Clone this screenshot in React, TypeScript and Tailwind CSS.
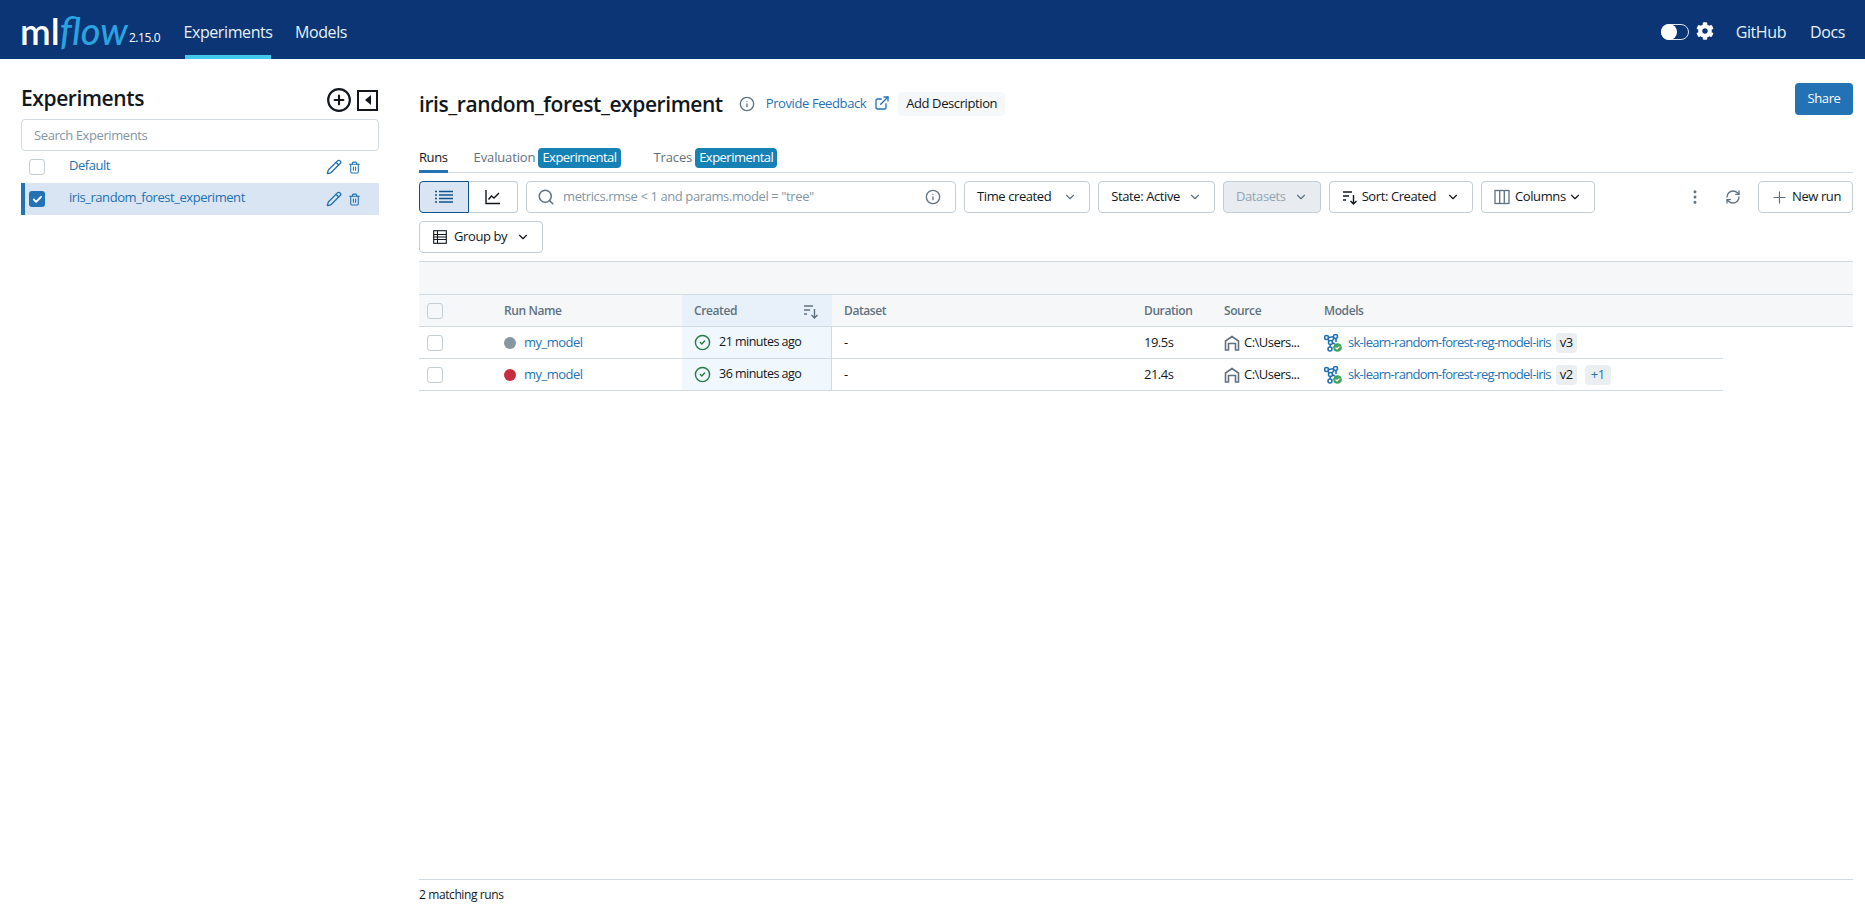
import React from 'react';
import {
  ChevronDown,
  CirclePlus,
  ExternalLink,
  Info,
  MoreVertical,
  Pencil,
  Plus,
  RefreshCw,
  Search,
  Trash2,
  Check,
  CircleCheck,
} from 'lucide-react';
import { FaCog } from 'react-icons/fa';

const SortIcon = () => (
  <svg width="16" height="16" viewBox="0 0 16 16" fill="none" stroke="currentColor" strokeWidth="1.4">
    <path d="M1 3h9M1 7h6M1 11h3M11.5 6v9M8.500 12l3 3 3-3" />
  </svg>
);

const ChartIcon = () => (
  <svg width="16" height="16" viewBox="0 0 16 16" fill="none" stroke="#11171c" strokeWidth="1.4">
    <path d="M1 1v13.500h14M3.500 10.500l3-3.500 2.500 2 5-5" />
  </svg>
);

const ListIcon = () => (
  <svg width="18" height="14" viewBox="0 0 18 14" fill="none" stroke="#0e538b" strokeWidth="1.6">
    <path d="M0 1.500h2M4 1.500h14M0 5h2M4 5h14M0 8.500h2M4 8.500h14M0 12h2M4 12h14" />
  </svg>
);

const GroupIcon = () => (
  <svg width="16" height="16" viewBox="0 0 16 16" fill="none" stroke="#11171c" strokeWidth="1.1">
    <rect x="1.700" y="1.700" width="12.600" height="12.600" />
    <path d="M1.700 5.500h12.600M1.700 8h12.600M1.700 10.500h12.600M5.500 1.700v12.600" />
  </svg>
);

const ColumnsIcon = () => (
  <svg width="16" height="16" viewBox="0 0 16 16" fill="none" stroke="#5f7281" strokeWidth="1.3">
    <rect x="1" y="1.500" width="14" height="13" />
    <path d="M5.700 1.500v13M10.300 1.500v13" />
  </svg>
);

const HouseIcon = () => (
  <svg width="16" height="16" viewBox="0 0 16 16" fill="none" stroke="#5f7281" strokeWidth="1.600">
    <path d="M1.500 15V6l6.500-4.500L14.500 6v9h-3V8.500h-7V15z" />
  </svg>
);

const ModelIcon = () => (
  <svg width="18" height="18" viewBox="0 0 18 18" fill="none" stroke="#2272b4" strokeWidth="1.6">
    <circle cx="2.500" cy="3.500" r="2" />
    <circle cx="11.500" cy="2.500" r="2" />
    <circle cx="6" cy="15" r="2" />
    <circle cx="6.500" cy="8.500" r="2" />
    <path d="M4.500 3.500l5-.8M3.800 5.200l1.500 1.800M8 7l2.300-3M6.200 10.500v2.500M12 4.500V8M8.500 9l2.500 1" />
    <circle cx="13.500" cy="13.500" r="4.300" fill="#3ba55c" stroke="none" />
    <path d="M11.500 13.500l1.500 1.500 2.500-2.500" stroke="#fff" strokeWidth="1.200" />
  </svg>
);

const Toolbutton = ({ children, disabled }: { children: React.ReactNode; disabled?: boolean }) => (
  <div
    className={`h-8 flex items-center rounded border border-[#c4ced7] px-3 text-[13px] ${
      disabled ? 'bg-[#e8ecf0] text-[#92a4b3]' : 'bg-white text-[#11171c]'
    }`}
  >
    {children}
  </div>
);

const ExperimentRow = ({ name, selected }: { name: string; selected?: boolean }) => (
  <div className={`h-8 flex items-center ${selected ? 'bg-[#d9e5f2] border-l-4 border-[#2272b4] pl-[4px]' : 'pl-2'}`}>
    {selected ? (
      <div className="w-4 h-4 rounded-[3px] bg-[#2272b4] flex items-center justify-center">
        <Check size={11} strokeWidth={4} className="text-white" />
      </div>
    ) : (
      <div className="w-4 h-4 rounded-[3px] border border-[#c4ced7] bg-white" />
    )}
    <span className="ml-[24px] mb-[3px] text-[13px] text-[#2272b4] flex-1 tracking-[-0.035em]">{name}</span>
    <Pencil size={16} className="text-[#2272b4] mr-[6px]" />
    <Trash2 size={13} className="text-[#2272b4] mr-[18px]" />
  </div>
);

const RunRow = ({ dot, time, dur, version, extra }: { dot: string; time: string; dur: string; version: string; extra?: boolean }) => (
  <div className="flex w-[1304px] h-8 border-b border-[#d1d9e1] text-[13px] text-[#11171c] tracking-[-0.04em]">
    <div className="w-[85px] pl-2 flex items-center">
      <div className="w-4 h-4 rounded-[3px] border border-[#c4ced7] bg-white" />
    </div>
    <div className="w-[178px] flex items-center">
      <div className={`w-3 h-3 rounded-full ${dot}`} />
      <span className="ml-2 text-[#2272b4]">my_model</span>
    </div>
    <div className="w-[150px] bg-[#f0f7fd] border-r border-[#d1d9e1] pl-3 flex items-center">
      <CircleCheck size={17} className="text-[#277c43]" />
      <span className="ml-2 text-[12.5px]">{time}</span>
    </div>
    <div className="w-[300px] pl-3 flex items-center">-</div>
    <div className="w-[80px] pl-3 flex items-center">{dur}</div>
    <div className="w-[100px] pl-3 flex items-center">
      <HouseIcon />
      <span className="ml-1">C:\Users...</span>
    </div>
    <div className="pl-3 flex items-center">
      <ModelIcon />
      <span className="ml-[6px] text-[#2272b4] tracking-[-0.055em]">sk-learn-random-forest-reg-model-iris</span>
      <span className="ml-[5px] bg-[#eaeef1] rounded px-1 h-[20px] flex items-center">{version}</span>
      {extra && <span className="ml-2 bg-[#eaeef1] text-[#2272b4] rounded px-1.5 h-[20px] flex items-center">+1</span>}
    </div>
  </div>
);

export default function App() {
  return (
    <div className="w-[1865px] h-[913px] flex flex-col bg-white font-['Open_Sans',sans-serif] tracking-[-0.025em] overflow-hidden">
      <header className="h-[59px] bg-[#0b3574] flex items-stretch text-white shrink-0">
        <div className="flex items-baseline pl-[20px] w-[185px] pt-[7px]">
          <span className="text-[37px] font-semibold leading-[46px] font-['Lato',sans-serif] tracking-normal">ml</span>
          <span className="text-[38px] font-medium leading-[46px] italic font-['Lato',sans-serif] tracking-normal text-[#2aa3e0]">flow</span>
          <span className="ml-[1px] text-[12px] -translate-y-[3px]">2.15.0</span>
        </div>
        <div className="h-full border-b-4 border-[#43c9ed] pt-[8px] flex items-center text-[16px] text-[#e6f1f5] w-[86px] justify-center">
          Experiments
        </div>
        <div className="ml-6 pt-1 flex items-center text-[16px] text-[#e6f1f5]">Models</div>
        <div className="ml-auto pt-1 flex items-center pr-[20px] text-[16px] text-[#e6f1f5]">
          <div className="w-7 h-4 rounded-full bg-[#0b3574] border border-[#dfe6ec] relative mr-[7px]">
            <div className="absolute left-[-1px] top-[-1px] w-4 h-4 rounded-full bg-white" />
          </div>
          <FaCog size={18} className="text-white mb-[2px]" />
          <span className="ml-[22px]">GitHub</span>
          <span className="ml-6">Docs</span>
        </div>
      </header>

      <div className="flex flex-1 min-h-0">
        <aside className="w-[419px] shrink-0 pl-[21px] pr-[40px] pt-6">
          <div className="flex items-center h-9">
            <h2 className="text-[21px] font-semibold text-[#11171c] flex-1 mb-[4px]">Experiments</h2>
            <CirclePlus size={26} className="text-[#11171c] mr-[5px] mb-[2px]" />
            <div className="w-[21px] h-[21px] border-2 border-[#11171c] flex items-center justify-center mr-[1px] mb-[2px]">
              <div className="w-0 h-0 border-y-[5px] border-y-transparent border-r-[6px] border-r-[#11171c]" />
            </div>
          </div>
          <div className="h-8 border border-[#d1d9e1] rounded flex items-center px-3 pt-px text-[13px] text-[#8396a5]">
            Search Experiments
          </div>
          <ExperimentRow name="Default" />
          <ExperimentRow name="iris_random_forest_experiment" selected />
        </aside>

        <main className="flex-1 min-w-0 pr-3 flex flex-col">
          <div className="flex items-center h-8 mt-6">
            <h1 className="text-[21px] font-semibold text-[#11171c] mt-[11px] tracking-[-0.02em]">iris_random_forest_experiment</h1>
            <Info size={16} className="ml-[16px] mt-[9px] text-[#5f7281]" />
            <span className="ml-[11px] mt-[9px] text-[13px] text-[#2272b4]">Provide Feedback</span>
            <ExternalLink size={16} className="ml-2 mt-[7px] text-[#2272b4]" />
            <span className="ml-2 mt-[9px] h-6 px-2 bg-[#f5f7f9] rounded text-[13px] text-[#11171c] flex items-center">Add Description</span>
            <div className="ml-auto h-8 w-[58px] rounded bg-[#2272b4] text-white text-[13px] flex items-center justify-center">Share</div>
          </div>

          <div className="mt-[25px] h-[33px] flex items-start border-b border-[#d1d9e1] text-[13px]">
            <div className="h-[33px] border-b-[3px] border-[#2272b4] text-[#11171c] font-medium flex items-center pt-[5px]">Runs</div>
            <div className="ml-[26px] h-[33px] pt-[2px] flex items-center text-[#5f7281] tracking-[-0.01em]">
              Evaluation
              <span className="ml-[3px] h-5 px-1 rounded bg-[#1681b4] text-white flex items-center tracking-[-0.04em]">Experimental</span>
            </div>
            <div className="ml-[33px] h-[33px] pt-[2px] flex items-center text-[#5f7281] tracking-[-0.01em]">
              Traces
              <span className="ml-[3px] h-5 px-1 rounded bg-[#1681b4] text-white flex items-center tracking-[-0.04em]">Experimental</span>
            </div>
          </div>

          <div className="mt-2 flex items-center gap-2">
            <div className="flex">
              <div className="w-[50px] h-8 bg-[#d9e5f2] border border-[#0e538b] rounded-l flex items-center justify-center">
                <ListIcon />
              </div>
              <div className="w-[49px] h-8 border border-l-0 border-[#c4ced7] rounded-r flex items-center justify-center">
                <ChartIcon />
              </div>
            </div>
            <div className="w-[430px] h-8 border border-[#c4ced7] rounded flex items-center pl-[10px] pr-[10px] text-[13px] text-[#8396a5]">
              <Search size={18} className="text-[#5f7281]" />
              <span className="ml-[8px] flex-1">metrics.rmse &lt; 1 and params.model = "tree"</span>
              <Info size={16} className="mr-[4px] text-[#5f7281]" />
            </div>
            <Toolbutton>
              Time created
              <ChevronDown size={14} className="ml-[12px] text-[#5f7281]" />
            </Toolbutton>
            <Toolbutton>
              State: Active
              <ChevronDown size={14} className="ml-[8px] text-[#5f7281]" />
            </Toolbutton>
            <Toolbutton disabled>
              Datasets
              <ChevronDown size={14} className="ml-2 text-[#5f7281]" />
            </Toolbutton>
            <Toolbutton>
              <SortIcon />
              <span className="ml-1">Sort: Created</span>
              <ChevronDown size={14} className="ml-[10px]" />
            </Toolbutton>
            <Toolbutton>
              <ColumnsIcon />
              <span className="ml-[5px]">Columns</span>
              <ChevronDown size={14} className="ml-[2px]" />
            </Toolbutton>
            <div className="ml-auto flex items-center">
              <MoreVertical size={18} className="text-[#5f7281]" />
              <RefreshCw size={16} className="ml-[21px] text-[#5f7281]" />
              <div className="ml-[17px] w-[95px] h-8 border border-[#c4ced7] rounded flex items-center justify-center text-[13px] text-[#11171c]">
                <Plus size={19} strokeWidth={1.5} className="text-[#5f7281] mr-[3px]" />
                New run
              </div>
            </div>
          </div>

          <div className="mt-2 self-start">
            <Toolbutton>
              <GroupIcon />
              <span className="ml-1.5">Group by</span>
              <ChevronDown size={14} className="ml-[9px]" />
            </Toolbutton>
          </div>

          <div className="mt-2 h-[34px] bg-[#f5f7f9] border-y border-[#d1d9e1]" />
          <div className="flex h-[32px] bg-[#f5f7f9] border-b border-[#d1d9e1] text-[12px] font-semibold text-[#5f7281]">
            <div className="w-[85px] pl-2 flex items-center">
              <div className="w-4 h-4 rounded-[3px] border border-[#c4ced7]" />
            </div>
            <div className="w-[178px] flex items-center">Run Name</div>
            <div className="w-[150px] bg-[#e8f1f9] pl-3 pr-[13px] flex items-center justify-between">
              Created
              <SortIcon />
            </div>
            <div className="w-[300px] pl-3 flex items-center">Dataset</div>
            <div className="w-[80px] pl-3 flex items-center">Duration</div>
            <div className="w-[100px] pl-3 flex items-center">Source</div>
            <div className="pl-3 flex items-center">Models</div>
          </div>
          <RunRow dot="bg-[#8796a3]" time="21 minutes ago" dur="19.5s" version="v3" />
          <RunRow dot="bg-[#c82d3f]" time="36 minutes ago" dur="21.4s" version="v2" extra />

          <div className="mt-auto mb-[12px] border-t border-[#d1d9e1] pt-[6px] text-[12px] text-[#11171c] h-[22px]">2 matching runs</div>
        </main>
      </div>
    </div>
  );
}
